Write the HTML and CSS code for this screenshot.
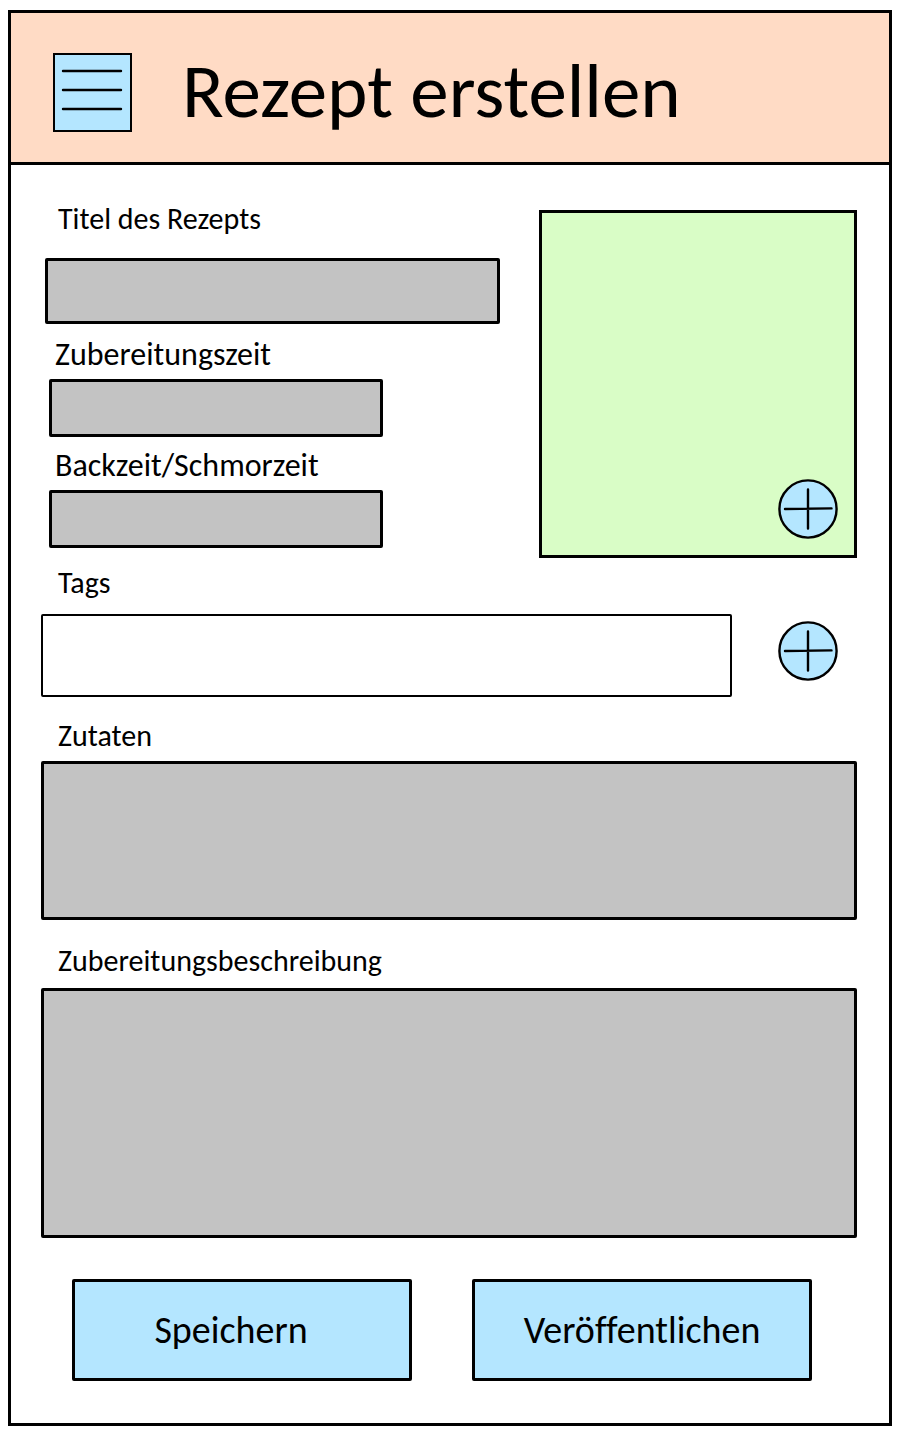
FILE: index.html
```
<!DOCTYPE html>
<html lang="de">
<head>
<meta charset="utf-8">
<meta name="viewport" content="width=device-width, initial-scale=1">
<title>Rezept erstellen</title>
<link rel="stylesheet" href="styles.css">
</head>
<body>
<div class="frame">
  <header class="header">
    <button class="menu" type="button" aria-label="Menü">
      <svg class="menu-icon" viewBox="0 0 75 75" aria-hidden="true">
        <path d="M8 16H66M8 35H66M8 54H66"/>
      </svg>
    </button>
    <h1 class="heading">Rezept erstellen</h1>
  </header>
  <form class="form">
    <div class="intro">
      <div class="basics">
        <label class="label" for="title">Titel des Rezepts</label>
        <input class="box title-box" id="title" type="text">
        <label class="label time-label" for="prep">Zubereitungszeit</label>
        <input class="box time-box" id="prep" type="text">
        <label class="label time-label" for="bake">Backzeit/Schmorzeit</label>
        <input class="box time-box" id="bake" type="text">
      </div>
      <div class="photo">
        <button class="add photo-add" type="button" aria-label="Bild hinzufügen">
          <svg class="add-icon" viewBox="0 0 60 60" aria-hidden="true">
            <circle cx="30" cy="30" r="28.6"/>
            <path d="M30 10.500V49.500M7 30L53.500 29.400"/>
          </svg>
        </button>
      </div>
    </div>
    <label class="label tags-label" for="tags">Tags</label>
    <div class="tags-row">
      <input class="box tags-box" id="tags" type="text">
      <button class="add" type="button" aria-label="Tag hinzufügen">
        <svg class="add-icon" viewBox="0 0 60 60" aria-hidden="true">
          <circle cx="30" cy="30" r="28.6"/>
          <path d="M30 10.500V49.500M7 30L53.500 29.400"/>
        </svg>
      </button>
    </div>
    <label class="label ingredients-label" for="ingredients">Zutaten</label>
    <textarea class="box ingredients-box" id="ingredients"></textarea>
    <label class="label steps-label" for="steps">Zubereitungsbeschreibung</label>
    <textarea class="box steps-box" id="steps"></textarea>
    <div class="actions">
      <button class="action save" type="button">Speichern</button>
      <button class="action" type="button">Veröffentlichen</button>
    </div>
  </form>
</div>
</body>
</html>
```

FILE: styles.css
```
* {
  box-sizing: border-box;
}

body {
  margin: 0;
  padding: 10px 8px 5px;
  background: #fff;
  color: #000;
  font-family: Carlito, Lato, "Open Sans", sans-serif;
}

.frame {
  border: 3px solid #000;
}

.header {
  display: flex;
  align-items: center;
  gap: 50px;
  min-height: 152px;
  padding: 16px 42px 6px;
  border-bottom: 3px solid #000;
  background: #ffdbc5;
}

.menu {
  flex: none;
  width: 79px;
  height: 79px;
  padding: 0;
  border: 2px solid #000;
  background: #b4e6ff;
}

.menu-icon {
  display: block;
  fill: none;
  stroke: #000;
  stroke-width: 2.4;
  stroke-linecap: round;
}

.heading {
  margin: 0 0 4px;
  font-size: 77px;
  font-weight: 400;
  line-height: 80px;
}

.form {
  display: flex;
  flex-direction: column;
  padding: 38px 32px 42px 30px;
}

.intro {
  display: grid;
  grid-template-columns: 13fr 9fr;
  gap: 39px;
}

.basics {
  display: flex;
  flex-direction: column;
  padding-left: 4px;
}

.label {
  padding-left: 17px;
  font-size: 30px;
  line-height: 32px;
}

.basics .label {
  padding-left: 13px;
}

.basics .time-label {
  padding-left: 10px;
  font-size: 32px;
}

.box {
  display: block;
  width: 100%;
  padding: 8px 12px;
  border: 3px solid #000;
  border-radius: 2px;
  background: #c3c3c3;
  font: inherit;
  font-size: 30px;
  resize: none;
}

.title-box {
  height: 66px;
  margin: 23px 0 15px;
}

.time-box {
  width: 80%;
  max-width: 334px;
  height: 58px;
  margin: 8px 0 13px 4px;
}

.time-box:last-child {
  margin-bottom: 0;
}

.photo {
  position: relative;
  min-height: 348px;
  margin-top: 7px;
  border: 3px solid #000;
  background: #d9fdc6;
}

.add {
  flex: none;
  width: 60px;
  height: 60px;
  padding: 0;
  border: 0;
  border-radius: 50%;
  background: none;
}

.photo-add {
  position: absolute;
  right: 16px;
  bottom: 16px;
}

.add-icon {
  display: block;
  fill: #b4e6ff;
  stroke: #000;
  stroke-width: 2.4;
  stroke-linecap: round;
}

.tags-label {
  margin-top: 9px;
}

.tags-row {
  display: flex;
  align-items: center;
  gap: 46px;
  padding-right: 19px;
  margin-top: 15px;
}

.tags-row .add {
  margin-bottom: 10px;
}

.tags-box {
  flex: 1;
  min-width: 0;
  height: 83px;
  border-width: 2px;
  background: #fff;
}

.ingredients-label {
  margin-top: 23px;
}

.ingredients-box {
  height: 159px;
  margin-top: 9px;
}

.steps-label {
  margin-top: 25px;
}

.steps-box {
  height: 250px;
  margin-top: 11px;
}

.actions {
  display: grid;
  grid-template-columns: 1fr 1fr;
  gap: 60px;
  padding: 41px 45px 0 31px;
}

.action {
  min-height: 102px;
  padding: 0;
  border: 3px solid #000;
  border-radius: 2px;
  background: #b4e6ff;
  color: #000;
  font: inherit;
  font-size: 38px;
  font-variant-ligatures: none;
}

.save {
  padding-right: 22px;
}
```
